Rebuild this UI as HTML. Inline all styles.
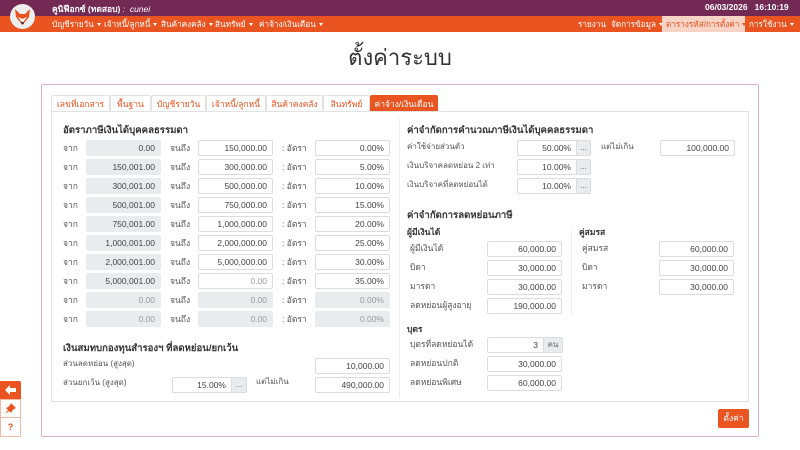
<!DOCTYPE html>
<html><head><meta charset="utf-8">
<style>
*{margin:0;padding:0;box-sizing:border-box}
body{width:800px;height:450px;position:relative;background:#fff;font-family:"Liberation Sans","Noto Sans CJK SC",sans-serif;overflow:hidden;color:#444}
.a{position:absolute}
.l{position:absolute;font-size:8.5px;color:#555;line-height:15px;white-space:nowrap}
.i{position:absolute;height:16px;border:1px solid #dcdcdc;border-radius:2px;background:#fff;font-size:8.5px;text-align:right;padding-right:5px;line-height:14px;color:#444;white-space:nowrap}
.g{background:#e9ecef;border-color:#e9ecef}
.gt{color:#999}
.b{position:absolute;height:16px;border:1px solid #dcdcdc;background:#e9ecef;font-size:8px;color:#666;text-align:center;line-height:13px;border-radius:0 2px 2px 0}
.h{position:absolute;font-size:9.6px;font-weight:bold;color:#333;white-space:nowrap}
.hs{position:absolute;font-size:8.5px;font-weight:bold;color:#333;white-space:nowrap}
.tab{position:absolute;top:95px;height:17px;border:1px solid #e2e2e2;border-bottom:none;font-size:8.5px;color:#e95420;text-align:center;line-height:16px;background:#fff;border-radius:2px 2px 0 0}
.nav{position:absolute;top:17px;font-size:8.2px;color:#fff;line-height:15px;white-space:nowrap}
.c{display:inline-block;width:0;height:0;border-left:2.5px solid transparent;border-right:2.5px solid transparent;border-top:3px solid currentColor;vertical-align:middle;margin-left:3px}
</style></head><body>
<div class="a" style="left:0;top:0;width:800px;height:16px;background:#722a55"></div>
<div class="a" style="left:0;top:16px;width:800px;height:16px;background:#e95420"></div>
<div class="a" style="left:10px;top:4px;width:25px;height:25px;border-radius:50%;background:#eee"></div>
<svg class="a" style="left:13px;top:8px" width="19" height="18" viewBox="0 0 19 18"><path d="M2 1 L7 6 L12 6 L17 1 L16 9 L9.5 17 L3 9 Z" fill="#e95420"/><path d="M5 9 L9.5 15 L14 9 L9.5 11 Z" fill="#fff"/><circle cx="9.5" cy="15" r="1.3" fill="#333"/></svg>
<div class="a" style="left:52px;top:2px;font-size:8.5px;color:#fff;font-weight:bold">คูนิฟีอกซ์ (ทดสอบ) <span style="font-weight:normal;font-style:italic">: &nbsp;cunei</span></div>
<div class="a" style="left:705px;top:2px;font-size:8.5px;color:#fff;font-weight:bold">06/03/2026 &nbsp;&nbsp;16:10:19</div>
<div class="nav" style="left:52px">บัญชีรายวัน<span class="c"></span></div>
<div class="nav" style="left:104px">เจ้าหนี้/ลูกหนี้<span class="c"></span></div>
<div class="nav" style="left:161px">สินค้าคงคลัง<span class="c"></span></div>
<div class="nav" style="left:215px">สินทรัพย์<span class="c"></span></div>
<div class="nav" style="left:259px">ค่าจ้าง/เงินเดือน<span class="c"></span></div>
<div class="nav" style="left:578px">รายงาน</div>
<div class="nav" style="left:611px">จัดการข้อมูล<span class="c"></span></div>
<div class="a" style="left:662px;top:16px;width:83px;height:16px;background:#f9d3c5"></div>
<div class="nav" style="left:666px;color:#e95420">ตารางรหัส/การตั้งค่า<span class="c"></span></div>
<div class="nav" style="left:749px">การใช้งาน<span class="c"></span></div>
<div class="a" style="left:0;top:40px;width:800px;text-align:center;font-size:22px;color:#333">ตั้งค่าระบบ</div>
<div class="a" style="left:41px;top:84px;width:718px;height:353px;border:1px solid #d9b0c6;border-radius:2px"></div>
<div class="tab" style="left:51px;width:59px">เลขที่เอกสาร</div>
<div class="tab" style="left:110px;width:41px">พื้นฐาน</div>
<div class="tab" style="left:151px;width:55px">บัญชีรายวัน</div>
<div class="tab" style="left:206px;width:60px">เจ้าหนี้/ลูกหนี้</div>
<div class="tab" style="left:266px;width:57px">สินค้าคงคลัง</div>
<div class="tab" style="left:323px;width:47px">สินทรัพย์</div>
<div class="tab" style="left:370px;width:68px;background:#e95420;color:#fff;border-color:#e95420">ค่าจ้าง/เงินเดือน</div>
<div class="a" style="left:51px;top:111px;width:698px;height:291px;border:1px solid #e2e2e2"></div>
<div class="a" style="left:399px;top:118px;width:1px;height:280px;background:#eee"></div>

<div class="h" style="left:63px;top:123px">อัตราภาษีเงินได้บุคคลธรรมดา</div>
<div class="l" style="left:63px;top:141px">จาก</div><div class="i g" style="left:86px;top:140px;width:75px">0.00</div><div class="l" style="left:170px;top:141px">จนถึง</div><div class="i" style="left:198px;top:140px;width:75px">150,000.00</div><div class="l" style="left:282px;top:141px">: อัตรา</div><div class="i" style="left:315px;top:140px;width:75px">0.00%</div>
<div class="l" style="left:63px;top:160px">จาก</div><div class="i g" style="left:86px;top:159px;width:75px">150,001.00</div><div class="l" style="left:170px;top:160px">จนถึง</div><div class="i" style="left:198px;top:159px;width:75px">300,000.00</div><div class="l" style="left:282px;top:160px">: อัตรา</div><div class="i" style="left:315px;top:159px;width:75px">5.00%</div>
<div class="l" style="left:63px;top:179px">จาก</div><div class="i g" style="left:86px;top:178px;width:75px">300,001.00</div><div class="l" style="left:170px;top:179px">จนถึง</div><div class="i" style="left:198px;top:178px;width:75px">500,000.00</div><div class="l" style="left:282px;top:179px">: อัตรา</div><div class="i" style="left:315px;top:178px;width:75px">10.00%</div>
<div class="l" style="left:63px;top:198px">จาก</div><div class="i g" style="left:86px;top:197px;width:75px">500,001.00</div><div class="l" style="left:170px;top:198px">จนถึง</div><div class="i" style="left:198px;top:197px;width:75px">750,000.00</div><div class="l" style="left:282px;top:198px">: อัตรา</div><div class="i" style="left:315px;top:197px;width:75px">15.00%</div>
<div class="l" style="left:63px;top:217px">จาก</div><div class="i g" style="left:86px;top:216px;width:75px">750,001.00</div><div class="l" style="left:170px;top:217px">จนถึง</div><div class="i" style="left:198px;top:216px;width:75px">1,000,000.00</div><div class="l" style="left:282px;top:217px">: อัตรา</div><div class="i" style="left:315px;top:216px;width:75px">20.00%</div>
<div class="l" style="left:63px;top:236px">จาก</div><div class="i g" style="left:86px;top:235px;width:75px">1,000,001.00</div><div class="l" style="left:170px;top:236px">จนถึง</div><div class="i" style="left:198px;top:235px;width:75px">2,000,000.00</div><div class="l" style="left:282px;top:236px">: อัตรา</div><div class="i" style="left:315px;top:235px;width:75px">25.00%</div>
<div class="l" style="left:63px;top:255px">จาก</div><div class="i g" style="left:86px;top:254px;width:75px">2,000,001.00</div><div class="l" style="left:170px;top:255px">จนถึง</div><div class="i" style="left:198px;top:254px;width:75px">5,000,000.00</div><div class="l" style="left:282px;top:255px">: อัตรา</div><div class="i" style="left:315px;top:254px;width:75px">30.00%</div>
<div class="l" style="left:63px;top:274px">จาก</div><div class="i g" style="left:86px;top:273px;width:75px">5,000,001.00</div><div class="l" style="left:170px;top:274px">จนถึง</div><div class="i gt" style="left:198px;top:273px;width:75px">0.00</div><div class="l" style="left:282px;top:274px">: อัตรา</div><div class="i" style="left:315px;top:273px;width:75px">35.00%</div>
<div class="l" style="left:63px;top:293px">จาก</div><div class="i g gt" style="left:86px;top:292px;width:75px">0.00</div><div class="l" style="left:170px;top:293px">จนถึง</div><div class="i g gt" style="left:198px;top:292px;width:75px">0.00</div><div class="l" style="left:282px;top:293px">: อัตรา</div><div class="i g gt" style="left:315px;top:292px;width:75px">0.00%</div>
<div class="l" style="left:63px;top:312px">จาก</div><div class="i g gt" style="left:86px;top:311px;width:75px">0.00</div><div class="l" style="left:170px;top:312px">จนถึง</div><div class="i g gt" style="left:198px;top:311px;width:75px">0.00</div><div class="l" style="left:282px;top:312px">: อัตรา</div><div class="i g gt" style="left:315px;top:311px;width:75px">0.00%</div>

<div class="h" style="left:63px;top:341px">เงินสมทบกองทุนสำรองฯ ที่ลดหย่อน/ยกเว้น</div>
<div class="l" style="left:63px;top:356px;font-size:8px">ส่วนลดหย่อน (สูงสุด)</div>
<div class="i" style="left:315px;top:358px;width:75px">10,000.00</div>
<div class="l" style="left:63px;top:375px;font-size:8px">ส่วนยกเว้น (สูงสุด)</div>
<div class="i" style="left:172px;top:377px;width:60px;border-radius:2px 0 0 2px">15.00%</div><div class="b" style="left:231px;top:377px;width:16px">...</div>
<div class="l" style="left:256px;top:374px;font-size:8px">แต่ไม่เกิน</div>
<div class="i" style="left:315px;top:377px;width:75px">490,000.00</div>

<div class="h" style="left:407px;top:123px">ค่าจำกัดการคำนวณภาษีเงินได้บุคคลธรรมดา</div>
<div class="l" style="left:407px;top:139px;font-size:8px">ค่าใช้จ่ายส่วนตัว</div>
<div class="i" style="left:517px;top:140px;width:60px;border-radius:2px 0 0 2px">50.00%</div><div class="b" style="left:576px;top:140px;width:15px">...</div>
<div class="l" style="left:601px;top:139px;font-size:8px">แต่ไม่เกิน</div>
<div class="i" style="left:660px;top:140px;width:75px">100,000.00</div>
<div class="l" style="left:407px;top:158px;font-size:8px">เงินบริจาคลดหย่อน 2 เท่า</div>
<div class="i" style="left:517px;top:159px;width:60px;border-radius:2px 0 0 2px">10.00%</div><div class="b" style="left:576px;top:159px;width:15px">...</div>
<div class="l" style="left:407px;top:177px;font-size:8px">เงินบริจาคที่ลดหย่อนได้</div>
<div class="i" style="left:517px;top:178px;width:60px;border-radius:2px 0 0 2px">10.00%</div><div class="b" style="left:576px;top:178px;width:15px">...</div>

<div class="h" style="left:407px;top:208px">ค่าจำกัดการลดหย่อนภาษี</div>
<div class="hs" style="left:407px;top:225px">ผู้มีเงินได้</div>
<div class="hs" style="left:579px;top:225px">คู่สมรส</div>
<div class="a" style="left:571px;top:230px;width:1px;height:85px;background:#eee"></div>
<div class="l" style="left:410px;top:241px">ผู้มีเงินได้</div><div class="i" style="left:487px;top:241px;width:75px">60,000.00</div>
<div class="l" style="left:410px;top:260px">บิดา</div><div class="i" style="left:487px;top:260px;width:75px">30,000.00</div>
<div class="l" style="left:410px;top:279px">มารดา</div><div class="i" style="left:487px;top:279px;width:75px">30,000.00</div>
<div class="l" style="left:410px;top:298px">ลดหย่อนผู้สูงอายุ</div><div class="i" style="left:487px;top:298px;width:75px">190,000.00</div>
<div class="l" style="left:582px;top:241px">คู่สมรส</div><div class="i" style="left:659px;top:241px;width:75px">60,000.00</div>
<div class="l" style="left:582px;top:260px">บิดา</div><div class="i" style="left:659px;top:260px;width:75px">30,000.00</div>
<div class="l" style="left:582px;top:279px">มารดา</div><div class="i" style="left:659px;top:279px;width:75px">30,000.00</div>
<div class="hs" style="left:407px;top:322px">บุตร</div>
<div class="l" style="left:410px;top:337px">บุตรที่ลดหย่อนได้</div><div class="i" style="left:487px;top:337px;width:57px;border-radius:2px 0 0 2px">3</div><div class="b" style="left:543px;top:337px;width:20px">คน</div>
<div class="l" style="left:410px;top:356px">ลดหย่อนปกติ</div><div class="i" style="left:487px;top:356px;width:75px">30,000.00</div>
<div class="l" style="left:410px;top:375px">ลดหย่อนพิเศษ</div><div class="i" style="left:487px;top:375px;width:75px">60,000.00</div>

<div class="a" style="left:718px;top:409px;width:31px;height:19px;background:#e95420;border-radius:2px;color:#fff;font-size:8.5px;text-align:center;line-height:19px">ตั้งค่า</div>

<div class="a" style="left:0;top:381px;width:21px;height:18px;background:#e95420;border-radius:0 2px 0 0"></div>
<svg class="a" style="left:5px;top:385px" width="11" height="10" viewBox="0 0 11 10"><path d="M0 5 L5 0 L5 3 L11 3 L11 7 L5 7 L5 10 Z" fill="#fff"/></svg>
<div class="a" style="left:0;top:399px;width:21px;height:19px;border:1px solid #f3b9a3"></div>
<svg class="a" style="left:5px;top:403px" width="11" height="11" viewBox="0 0 11 11"><path d="M6 0 L11 5 L9 6 L7 8 L6 10 L1 5 L3 4 L5 2 Z M3 7 L0 11 L4 8 Z" fill="#e95420"/></svg>
<div class="a" style="left:0;top:418px;width:21px;height:19px;border:1px solid #f3b9a3;border-top:none;color:#e95420;font-size:9px;font-weight:bold;text-align:center;line-height:18px">?</div>
</body></html>
